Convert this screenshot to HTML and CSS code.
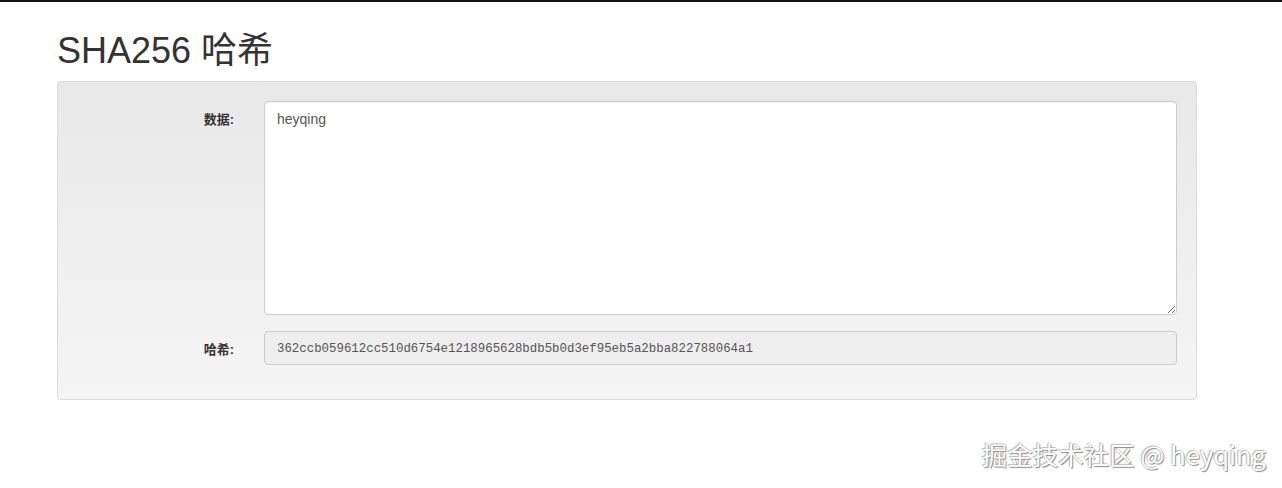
FILE: index.html
```html
<!DOCTYPE html>
<html lang="zh-CN">
<head>
    <meta charset="UTF-8">
    <title>SHA256 哈希</title>
    <link rel="stylesheet" href="styles.css">
</head>
<body>
    <div class="container">
        <h1>SHA256 哈希</h1>
        <div class="well">
            <div class="row">
                <label class="label label-top" for="data">数据:</label>
                <textarea id="data" class="field data">heyqing</textarea>
            </div>
            <div class="row">
                <label class="label" for="hash">哈希:</label>
                <input id="hash" class="field hash" readonly value="362ccb059612cc510d6754e1218965628bdb5b0d3ef95eb5a2bba822788064a1">
            </div>
        </div>
    </div>
    <div class="watermark">掘金技术社区 @ heyqing</div>
</body>
</html>
```

FILE: styles.css
```css
body {
    margin: 0;
    border-top: 2px solid #111;
    font-family: Arial, "Liberation Sans", "Noto Sans CJK SC", sans-serif;
    color: #333;
    background: #fff;
    height: 486px;
    position: relative;
}
.container {
    width: 1140px;
    padding-left: 57px;
}
h1 {
    font-size: 36px;
    font-weight: normal;
    line-height: 40px;
    margin: 0;
    padding: 29px 0 10px;
    color: #333;
}
.well {
    background: linear-gradient(to bottom, #e8e8e8, #f5f5f5);
    border: 1px solid #dcdcdc;
    border-radius: 4px;
    padding: 19px 19px 34px 0;
    display: flex;
    flex-direction: column;
    gap: 16px;
}
.row {
    display: grid;
    grid-template-columns: 176px 1fr;
    column-gap: 30px;
    align-items: center;
}
.label {
    text-align: right;
    font-size: 13px;
    font-weight: bold;
    color: #333;
}
.label-top {
    align-self: start;
    padding-top: 8px;
}
.field {
    box-sizing: border-box;
    width: 100%;
    border: 1px solid #ccc;
    border-radius: 4px;
    color: #555;
    margin: 0;
    outline: none;
}
.data {
    height: 214px;
    background: #fff;
    padding: 7px 12px;
    font-family: Arial, "Liberation Sans", sans-serif;
    font-size: 14px;
    line-height: 20px;
    resize: vertical;
    box-shadow: inset 0 1px 1px rgba(0, 0, 0, 0.06);
}
.hash {
    height: 34px;
    background: #eee;
    padding: 8px 12px 6px;
    font-family: "Liberation Mono", "DejaVu Sans Mono", monospace;
    font-size: 12.4px;
    color: #555;
}
.watermark {
    position: absolute;
    right: 16px;
    top: 436px;
    font-family: "Noto Sans CJK SC", "Liberation Sans", sans-serif;
    font-size: 25.5px;
    line-height: 32px;
    color: #fff;
    text-shadow: 1px 1px 1px #888, -1px -1px 1px #bbb, 0 0 1px #999;
}
```
